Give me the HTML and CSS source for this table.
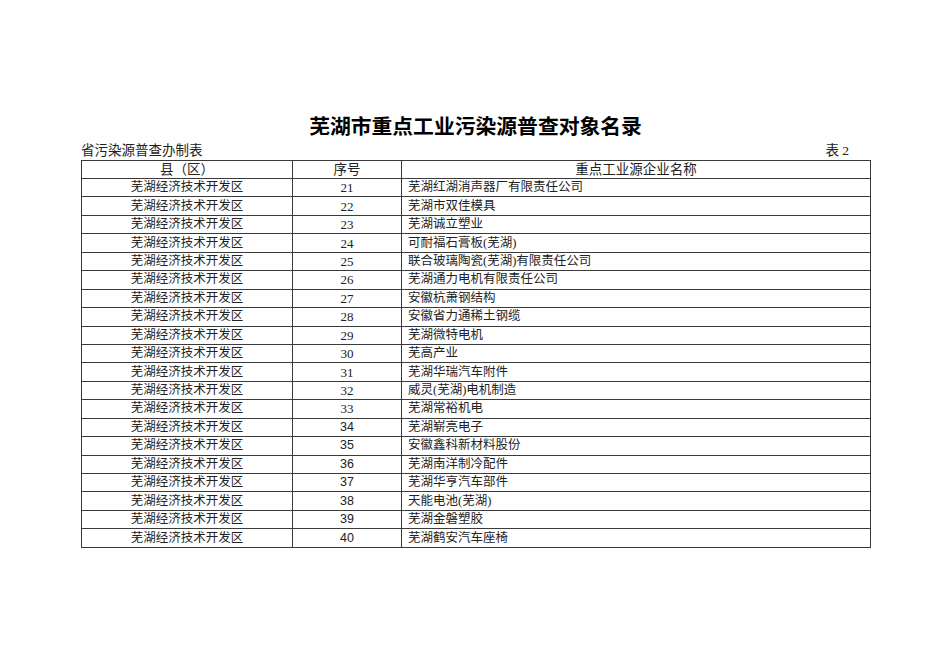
FILE: index.html
```html
<!DOCTYPE html>
<html lang="zh">
<head>
<meta charset="utf-8">
<link rel="stylesheet" href="styles.css">
</head>
<body>
<div class="page">
  <h1 class="title">芜湖市重点工业污染源普查对象名录</h1>
  <div class="caption">
    <span>省污染源普查办制表</span>
    <span>表 2</span>
  </div>
  <table class="list">
    <colgroup><col class="c1"><col class="c2"><col class="c3"></colgroup>
    <thead>
      <tr><th>县（区）</th><th>序号</th><th>重点工业源企业名称</th></tr>
    </thead>
    <tbody>
      <tr><td>芜湖经济技术开发区</td><td class="num">21</td><td class="name">芜湖红湖消声器厂有限责任公司</td></tr>
      <tr><td>芜湖经济技术开发区</td><td class="num">22</td><td class="name">芜湖市双佳模具</td></tr>
      <tr><td>芜湖经济技术开发区</td><td class="num">23</td><td class="name">芜湖诚立塑业</td></tr>
      <tr><td>芜湖经济技术开发区</td><td class="num">24</td><td class="name">可耐福石膏板(芜湖)</td></tr>
      <tr><td>芜湖经济技术开发区</td><td class="num">25</td><td class="name">联合玻璃陶瓷(芜湖)有限责任公司</td></tr>
      <tr><td>芜湖经济技术开发区</td><td class="num">26</td><td class="name">芜湖通力电机有限责任公司</td></tr>
      <tr><td>芜湖经济技术开发区</td><td class="num">27</td><td class="name">安徽杭萧钢结构</td></tr>
      <tr><td>芜湖经济技术开发区</td><td class="num">28</td><td class="name">安徽省力通稀土钢缆</td></tr>
      <tr><td>芜湖经济技术开发区</td><td class="num">29</td><td class="name">芜湖微特电机</td></tr>
      <tr><td>芜湖经济技术开发区</td><td class="num">30</td><td class="name">芜高产业</td></tr>
      <tr><td>芜湖经济技术开发区</td><td class="num">31</td><td class="name">芜湖华瑞汽车附件</td></tr>
      <tr><td>芜湖经济技术开发区</td><td class="num">32</td><td class="name">威灵(芜湖)电机制造</td></tr>
      <tr><td>芜湖经济技术开发区</td><td class="num">33</td><td class="name">芜湖常裕机电</td></tr>
      <tr><td>芜湖经济技术开发区</td><td class="num sans">34</td><td class="name">芜湖崭亮电子</td></tr>
      <tr><td>芜湖经济技术开发区</td><td class="num sans">35</td><td class="name">安徽鑫科新材料股份</td></tr>
      <tr><td>芜湖经济技术开发区</td><td class="num sans">36</td><td class="name">芜湖南洋制冷配件</td></tr>
      <tr><td>芜湖经济技术开发区</td><td class="num sans">37</td><td class="name">芜湖华亨汽车部件</td></tr>
      <tr><td>芜湖经济技术开发区</td><td class="num sans">38</td><td class="name">天能电池(芜湖)</td></tr>
      <tr><td>芜湖经济技术开发区</td><td class="num sans">39</td><td class="name">芜湖金磐塑胶</td></tr>
      <tr><td>芜湖经济技术开发区</td><td class="num sans">40</td><td class="name">芜湖鹤安汽车座椅</td></tr>
    </tbody>
  </table>
</div>
</body>
</html>
```

FILE: styles.css
```css
html, body {
  margin: 0;
  padding: 0;
  background: #ffffff;
}
body {
  font-family: "Liberation Serif", "Noto Sans CJK SC", serif;
  color: #222;
}
.page {
  width: 789px;
  margin-left: 81px;
  padding-top: 113px;
}
.title {
  margin: 0;
  font-family: "Liberation Sans", "Noto Sans CJK SC", sans-serif;
  font-weight: bold;
  font-size: 20.8px;
  line-height: 28px;
  text-align: center;
  color: #000;
}
.caption {
  display: flex;
  justify-content: space-between;
  padding-right: 21px;
  font-size: 13.5px;
  line-height: 18px;
  margin-top: 1px;
}
.list {
  border-collapse: collapse;
  width: 789px;
  table-layout: fixed;
}
.c1 { width: 211px; }
.c2 { width: 109px; }
.c3 { width: 469px; }
.list th, .list td {
  border: 1px solid #3a3a3a;
  padding: 0;
  text-align: center;
  vertical-align: middle;
  white-space: nowrap;
}
.list th {
  font-weight: normal;
  font-size: 13.5px;
  height: 17px;
  line-height: 17px;
}
.list td {
  font-size: 12.5px;
  height: 17.45px;
  line-height: 17px;
}
.list td.name {
  text-align: left;
  padding-left: 6px;
}
.list td.num {
  font-size: 13px;
}
.list td.sans {
  font-family: "Liberation Sans", sans-serif;
  font-size: 12.5px;
}
```
